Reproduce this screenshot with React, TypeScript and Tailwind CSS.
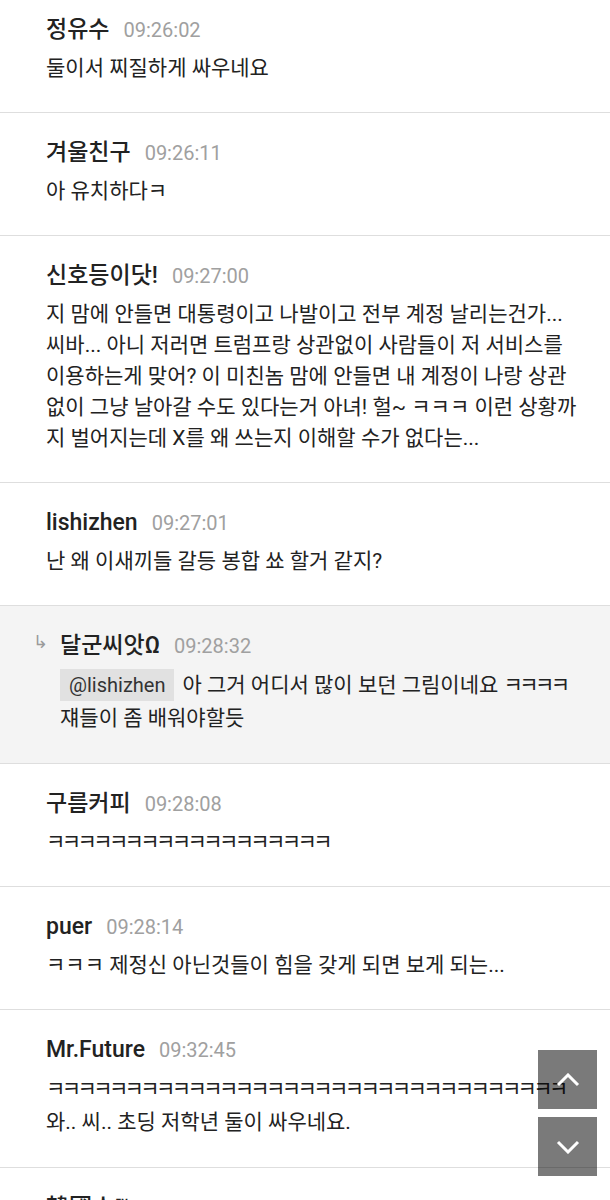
import React from "react";

type Comment = {
  name: string;
  time: string;
  lines: React.ReactNode;
  reply?: boolean;
  tag?: string;
  loose?: boolean;
};

const Kk = ({ n }: { n: number }) => (
  <span className="tracking-[-3.6px]">{"ㅋ".repeat(n)}</span>
);

const comments: Comment[] = [
  { name: "정유수", time: "09:26:02", lines: "둘이서 찌질하게 싸우네요" },
  { name: "겨울친구", time: "09:26:11", lines: "아 유치하다ㅋ" },
  {
    name: "신호등이닷!",
    time: "09:27:00",
    lines:
      "지 맘에 안들면 대통령이고 나발이고 전부 계정 날리는건가... 씨바... 아니 저러면 트럼프랑 상관없이 사람들이 저 서비스를 이용하는게 맞어? 이 미친놈 맘에 안들면 내 계정이 나랑 상관없이 그냥 날아갈 수도 있다는거 아녀! 헐~ ㅋㅋㅋ 이런 상황까지 벌어지는데 X를 왜 쓰는지 이해할 수가 없다는...",
  },
  { name: "lishizhen", time: "09:27:01", lines: "난 왜 이새끼들 갈등 봉합 쑈 할거 같지?" },
  {
    name: "달군씨앗Ω",
    time: "09:28:32",
    reply: true,
    loose: true,
    tag: "@lishizhen",
    lines: (
      <>
        아 그거 어디서 많이 보던 그림이네요 <Kk n={4} />
        <br />
        쟤들이 좀 배워야할듯
      </>
    ),
  },
  { name: "구름커피", time: "09:28:08", lines: <Kk n={18} /> },
  { name: "puer", time: "09:28:14", lines: "ㅋㅋㅋ 제정신 아닌것들이 힘을 갖게 되면 보게 되는..." },
  {
    name: "Mr.Future",
    time: "09:32:45",
    loose: true,
    lines: (
      <>
        <Kk n={33} />
        <br />
        와.. 씨.. 초딩 저학년 둘이 싸우네요.
      </>
    ),
  },
  { name: "韓國人™", time: "09:33:27", lines: "ㅋㅋㅋㅋㅋ" },
];

function CommentRow({ c }: { c: Comment }) {
  return (
    <div
      className={
        "border-b border-[#dedede] pt-[25px] pb-[28px] pr-[30px] " +
        (c.reply ? "bg-[#f4f4f4] pl-[60px] relative" : "bg-white pl-[46px]")
      }
    >
      {c.reply && (
        <span className="absolute left-[33px] top-[22px] text-[18px] text-[#9a9a9a]">↳</span>
      )}
      <div className="flex items-center gap-[14px] h-[30px]">
        <span className="text-[23px] font-medium text-[#222]">{c.name}</span>
        <span className="text-[20px] text-[#a0a0a0]">{c.time}</span>
      </div>
      <p className={"mt-2 text-[21px] text-[#222] break-all " + (c.loose ? "leading-[33px]" : "leading-[31px]")}>
        {c.tag && (
          <span className="mr-[8px] inline-block bg-[#e1e1e1] px-[9px] leading-[32px] text-[20px] text-[#333]">
            {c.tag}
          </span>
        )}
        {c.lines}
      </p>
    </div>
  );
}

export default function App() {
  return (
    <div className="h-[1200px] overflow-hidden bg-white font-['Roboto','Noto_Sans_CJK_KR',sans-serif]">
      <div className="-mt-[10px]">
        {comments.map((c, i) => (
          <CommentRow key={i} c={c} />
        ))}
      </div>

      <div className="fixed right-[13px] bottom-[24px] flex flex-col gap-2">
        <button className="flex h-[59px] w-[59px] items-center justify-center bg-[rgba(0,0,0,0.52)]">
          <svg width="24" height="14" viewBox="0 0 24 14" fill="none">
            <polyline points="2,12 12,2 22,12" stroke="white" strokeWidth="3" />
          </svg>
        </button>
        <button className="flex h-[59px] w-[59px] items-center justify-center bg-[rgba(0,0,0,0.52)]">
          <svg width="24" height="14" viewBox="0 0 24 14" fill="none">
            <polyline points="2,2 12,12 22,2" stroke="white" strokeWidth="3" />
          </svg>
        </button>
      </div>
    </div>
  );
}
